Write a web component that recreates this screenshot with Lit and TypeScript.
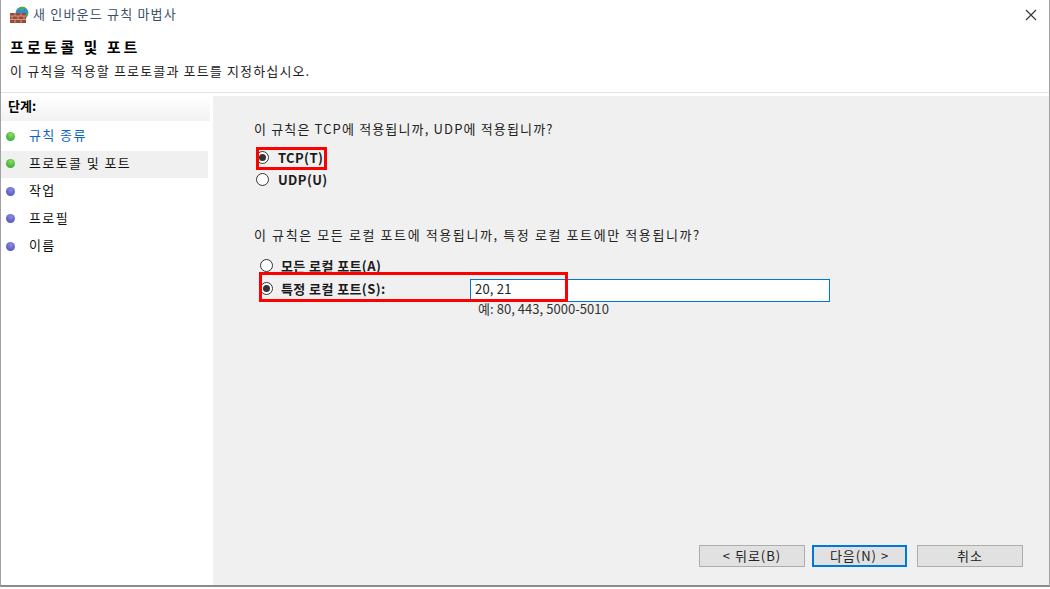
import { LitElement, html, css } from 'lit';
import { customElement } from 'lit/decorators.js';

const steps = [
  { label: '규칙 종류', done: true, link: true },
  { label: '프로토콜 및 포트', done: true, active: true },
  { label: '작업' },
  { label: '프로필' },
  { label: '이름' },
];

@customElement('app-root')
export class AppRoot extends LitElement {
  static styles = css`
    :host {
      display: block;
      width: 1050px;
      height: 589px;
      overflow: hidden;
      background: #fff;
      color: #000;
      font-family: "Noto Sans CJK KR", "Liberation Sans", sans-serif;
      font-size: 13px;
    }

    .window {
      box-sizing: border-box;
      height: 587px;
      width: 1050px;
      display: flex;
      flex-direction: column;
      border: 1px solid #a0a0a0;
      border-top: none;
      border-bottom: 2px solid #8c8c8c;
      position: relative;
    }

    .titlebar {
      height: 30px;
      flex: none;
      display: flex;
      align-items: center;
      padding-left: 8px;
      gap: 4px;
    }
    .titlebar .icon { margin-top: -4px; }
    .titlebar .title { flex: 1; letter-spacing: 1.2px; color: #3c4f6c; margin-top: -3px; }
    .titlebar .close { width: 12px; height: 12px; margin-right: 12px; }

    .heading {
      flex: none;
      height: 63px;
      box-sizing: border-box;
      padding: 7px 0 0 9px;
      border-bottom: 1px solid #e4e4e4;
    }
    .heading h1 {
      margin: 0;
      font-size: 15px;
      line-height: 20px;
      font-weight: 700;
      letter-spacing: 3px;
    }
    .heading p {
      margin: 5px 0 0;
      line-height: 18px;
      letter-spacing: 1.15px;
      color: #222;
    }

    .body {
      flex: 1;
      min-height: 0;
      display: flex;
      padding-top: 3px;
      gap: 3px;
    }

    .side {
      width: 209px;
      flex: none;
    }
    .side-head {
      height: 25px;
      padding-left: 7px;
      font-weight: 700;
      line-height: 20px;
      background: linear-gradient(#fff, #f2f2f2);
    }
    .step {
      height: 27.5px;
      width: 207px;
      display: flex;
      align-items: center;
      padding: 0 0 4px 5px;
      box-sizing: border-box;
      letter-spacing: 1.4px;
      color: #111;
    }
    .step .dot {
      width: 9px;
      height: 9px;
      border-radius: 50%;
      margin: 3px 14px 0 0;
      background: radial-gradient(circle at 55% 30%, #8a8de0, #5a5cc0 70%);
    }
    .step.done .dot { background: radial-gradient(circle at 55% 30%, #8ce060, #3fae3f 70%); }
    .step.link { color: #0a66c2; }
    .step.active { background: #f0f0f0; }
    .steps { padding-top: 2px; }

    .main {
      flex: 1;
      background: #f0f0f0;
      display: flex;
      flex-direction: column;
      padding: 24px 25px 0 41px;
      min-width: 0;
    }
    .question {
      line-height: 18px;
      letter-spacing: 1.15px;
      color: #222;
    }
    .radios { margin-top: 11px; display: flex; flex-direction: column; gap: 6px; margin-left: 2px; }
    .radio {
      display: flex;
      align-items: center;
      height: 16px;
      gap: 8px;
      font-weight: 700;
      color: #1b1b1b;
      letter-spacing: 0.4px;
    }
    .radios .radio { gap: 9px; }
    .radio .mark {
      box-sizing: border-box;
      width: 13px;
      height: 13px;
      flex: none;
      border-radius: 50%;
      border: 1px solid #333;
      background: #fff;
      display: flex;
      align-items: center;
      justify-content: center;
    }
    .radio .mark.on::after {
      content: '';
      width: 7px;
      height: 7px;
      border-radius: 50%;
      background: #333;
    }
    .q2 { margin-top: 39px; letter-spacing: 1.6px; }
    .ports { margin-top: 13px; margin-left: 6px; display: flex; flex-direction: column; }
    .port-row { display: flex; align-items: flex-start; height: 23px; margin-top: 6px; }
    .port-row .radio { width: 210px; flex: none; margin-top: 1px; }
    .port-input {
      box-sizing: border-box;
      width: 360px;
      height: 23px;
      background: #fff;
      border: 1px solid #0078d7;
      padding-left: 4px;
      line-height: 18px;
      letter-spacing: 0.2px;
      color: #222;
    }
    .hint {
      margin-left: 218px;
      line-height: 14px;
      letter-spacing: 0.05px;
      color: #333;
    }

    .buttons {
      margin-top: auto;
      display: flex;
      justify-content: flex-end;
      padding: 0 1px 18px 0;
    }
    .buttons div {
      box-sizing: border-box;
      height: 22px;
      width: 106px;
      background: #e1e1e1;
      border: 1px solid #adadad;
      padding-bottom: 2px;
      display: flex;
      align-items: center;
      justify-content: center;
      color: #222;
      letter-spacing: 1px;
    }
    .buttons .primary {
      width: 95px;
      border: 2px solid #0078d7;
      margin: 0 10px 0 7px;
    }

    .hl {
      position: absolute;
      box-sizing: border-box;
      border: 3px solid #f00;
      pointer-events: none;
    }
    .hl.tcp { left: 255px; top: 147px; width: 71px; height: 23px; }
    .hl.port { left: 258px; top: 272px; width: 309px; height: 30px; }
  `;

  render() {
    return html`
      <div class="window">
        <div class="titlebar">
          <svg class="icon" width="20" height="20" viewBox="0 0 20 20">
            <circle cx="13" cy="10" r="6.300" fill="#2b8fd8" />
            <path d="M9.500 5.500c2-2 5-2.500 7-1-1 2-3 3-4.500 3-1 0-2-1-2.500-2zM16 10c1.500 0 2.500.5 3 1l-1 3-2.500-1z" fill="#45b04a" />
            <rect x="1" y="10" width="16" height="11" fill="#9c4a36" />
            <path d="M1 13h16M1 16.500h16M6 10v3M12 10v3M3 13v3.500M9 13v3.500M15 13v3.500M6 16.500V21M12 16.500V21" stroke="#d8a898" stroke-width=".8" fill="none" />
          </svg>
          <span class="title">새 인바운드 규칙 마법사</span>
          <svg class="close" viewBox="0 0 12 12">
            <path d="M1 1l10 10M11 1L1 11" stroke="#333" stroke-width="1.100" fill="none" />
          </svg>
        </div>
        <div class="heading">
          <h1>프로토콜 및 포트</h1>
          <p>이 규칙을 적용할 프로토콜과 포트를 지정하십시오.</p>
        </div>
        <div class="body">
          <div class="side">
            <div class="side-head">단계:</div>
            <div class="steps">
              ${steps.map(
                (s) => html`
                  <div class="step ${s.done ? 'done' : ''} ${s.link ? 'link' : ''} ${s.active ? 'active' : ''}">
                    <span class="dot"></span>${s.label}
                  </div>
                `
              )}
            </div>
          </div>
          <div class="main">
            <div class="question">이 규칙은 TCP에 적용됩니까, UDP에 적용됩니까?</div>
            <div class="radios">
              <div class="radio"><span class="mark on"></span>TCP(T)</div>
              <div class="radio"><span class="mark"></span>UDP(U)</div>
            </div>
            <div class="question q2">이 규칙은 모든 로컬 포트에 적용됩니까, 특정 로컬 포트에만 적용됩니까?</div>
            <div class="ports">
              <div class="radio"><span class="mark"></span>모든 로컬 포트(A)</div>
              <div class="port-row">
                <div class="radio"><span class="mark on"></span>특정 로컬 포트(S):</div>
                <div class="port-input">20, 21</div>
              </div>
              <div class="hint">예: 80, 443, 5000-5010</div>
            </div>
            <div class="buttons">
              <div>&lt; 뒤로(B)</div>
              <div class="primary">다음(N) &gt;</div>
              <div>취소</div>
            </div>
          </div>
        </div>
        <div class="hl tcp"></div>
        <div class="hl port"></div>
      </div>
    `;
  }
}
